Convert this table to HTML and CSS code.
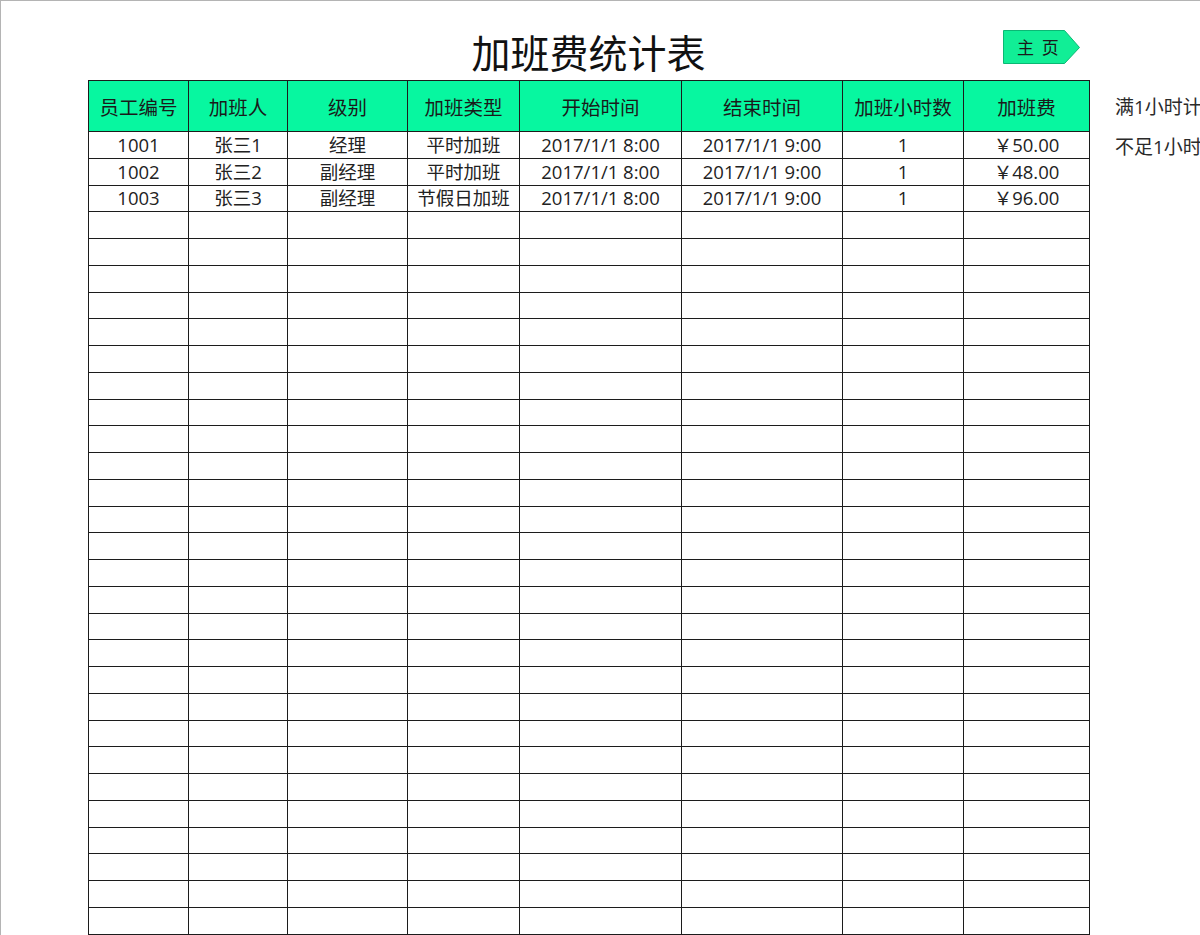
FILE: index.html
```html
<!DOCTYPE html>
<html lang="zh-CN">
<head>
<meta charset="utf-8">
<title>加班费统计表</title>
<link rel="stylesheet" href="styles.css">
</head>
<body>
<div class="page">
  <div class="main">
    <div class="head">
      <div class="spacer"></div>
      <h1 class="title">加班费统计表</h1>
      <a class="home-btn" href="#">
        <svg class="home-shape" width="78" height="35" viewBox="0 0 78 35">
          <polygon points="0.5,0.5 61.5,0.5 76.5,17.5 61.5,33.5 0.5,33.5" fill="#11ee96" stroke="#0bb874" stroke-width="1"/>
        </svg>
        <span class="home-label">主 页</span>
      </a>
    </div>
    <table class="sheet">
      <colgroup>
        <col style="width:100px"><col style="width:99px"><col style="width:120px"><col style="width:112px"><col style="width:162px"><col style="width:161px"><col style="width:121px"><col style="width:126px">
      </colgroup>
      <thead>
        <tr><th>员工编号</th><th>加班人</th><th>级别</th><th>加班类型</th><th>开始时间</th><th>结束时间</th><th>加班小时数</th><th>加班费</th></tr>
      </thead>
      <tbody>
        <tr><td>1001</td><td>张三1</td><td>经理</td><td>平时加班</td><td>2017/1/1 8:00</td><td>2017/1/1 9:00</td><td>1</td><td>￥50.00</td></tr>
        <tr><td>1002</td><td>张三2</td><td>副经理</td><td>平时加班</td><td>2017/1/1 8:00</td><td>2017/1/1 9:00</td><td>1</td><td>￥48.00</td></tr>
        <tr><td>1003</td><td>张三3</td><td>副经理</td><td>节假日加班</td><td>2017/1/1 8:00</td><td>2017/1/1 9:00</td><td>1</td><td>￥96.00</td></tr>
        <tr><td></td><td></td><td></td><td></td><td></td><td></td><td></td><td></td></tr>
        <tr><td></td><td></td><td></td><td></td><td></td><td></td><td></td><td></td></tr>
        <tr><td></td><td></td><td></td><td></td><td></td><td></td><td></td><td></td></tr>
        <tr><td></td><td></td><td></td><td></td><td></td><td></td><td></td><td></td></tr>
        <tr><td></td><td></td><td></td><td></td><td></td><td></td><td></td><td></td></tr>
        <tr><td></td><td></td><td></td><td></td><td></td><td></td><td></td><td></td></tr>
        <tr><td></td><td></td><td></td><td></td><td></td><td></td><td></td><td></td></tr>
        <tr><td></td><td></td><td></td><td></td><td></td><td></td><td></td><td></td></tr>
        <tr><td></td><td></td><td></td><td></td><td></td><td></td><td></td><td></td></tr>
        <tr><td></td><td></td><td></td><td></td><td></td><td></td><td></td><td></td></tr>
        <tr><td></td><td></td><td></td><td></td><td></td><td></td><td></td><td></td></tr>
        <tr><td></td><td></td><td></td><td></td><td></td><td></td><td></td><td></td></tr>
        <tr><td></td><td></td><td></td><td></td><td></td><td></td><td></td><td></td></tr>
        <tr><td></td><td></td><td></td><td></td><td></td><td></td><td></td><td></td></tr>
        <tr><td></td><td></td><td></td><td></td><td></td><td></td><td></td><td></td></tr>
        <tr><td></td><td></td><td></td><td></td><td></td><td></td><td></td><td></td></tr>
        <tr><td></td><td></td><td></td><td></td><td></td><td></td><td></td><td></td></tr>
        <tr><td></td><td></td><td></td><td></td><td></td><td></td><td></td><td></td></tr>
        <tr><td></td><td></td><td></td><td></td><td></td><td></td><td></td><td></td></tr>
        <tr><td></td><td></td><td></td><td></td><td></td><td></td><td></td><td></td></tr>
        <tr><td></td><td></td><td></td><td></td><td></td><td></td><td></td><td></td></tr>
        <tr><td></td><td></td><td></td><td></td><td></td><td></td><td></td><td></td></tr>
        <tr><td></td><td></td><td></td><td></td><td></td><td></td><td></td><td></td></tr>
        <tr><td></td><td></td><td></td><td></td><td></td><td></td><td></td><td></td></tr>
        <tr><td></td><td></td><td></td><td></td><td></td><td></td><td></td><td></td></tr>
        <tr><td></td><td></td><td></td><td></td><td></td><td></td><td></td><td></td></tr>
        <tr><td></td><td></td><td></td><td></td><td></td><td></td><td></td><td></td></tr>
        <tr><td></td><td></td><td></td><td></td><td></td><td></td><td></td><td></td></tr>
        <tr><td></td><td></td><td></td><td></td><td></td><td></td><td></td><td></td></tr>
      </tbody>
    </table>
  </div>
  <div class="notes">
    <p class="note note-first">满1小时计</p>
    <p class="note">不足1小时</p>
  </div>
</div>
</body>
</html>
```

FILE: styles.css
```css
html, body {
  margin: 0;
  padding: 0;
  background: #ffffff;
  overflow: hidden;
  height: 100%;
}

body {
  font-family: "Noto Sans CJK SC", "Noto Sans", sans-serif;
  color: #1e1e1e;
}

.page {
  display: flex;
  align-items: flex-start;
  border-top: 1px solid #b4b4b4;
  border-left: 1px solid #b4b4b4;
  height: 100%;
  padding-left: 87px;
  box-sizing: border-box;
  width: 1200px;
  overflow: hidden;
}

.main {
  width: 1001px;
  flex: none;
}

.head {
  display: grid;
  grid-template-columns: 1fr auto 1fr;
  align-items: start;
  height: 79px;
}

.title {
  margin: 26px 0 0 0;
  font-size: 39px;
  line-height: 48px;
  font-weight: 400;
  color: #111;
  letter-spacing: 0;
}

.home-btn {
  justify-self: end;
  margin: 29px 8px 0 0;
  display: grid;
  width: 78px;
  height: 35px;
  text-decoration: none;
  color: #1a1a1a;
}

.home-shape,
.home-label {
  grid-area: 1 / 1;
}

.home-label {
  font-size: 17px;
  line-height: 34px;
  padding-left: 14px;
  letter-spacing: 2px;
}

.sheet {
  border-collapse: collapse;
  table-layout: fixed;
  width: 1001px;
}

.sheet th,
.sheet td {
  border: 1px solid #1c1c1c;
  padding: 0;
  text-align: center;
  white-space: nowrap;
  overflow: hidden;
}

.sheet th {
  background: #07f7a0;
  height: 50px;
  font-size: 19.5px;
  font-weight: 400;
  color: #1a1a1a;
}

.sheet tbody tr {
  height: 26.75px;
}

.sheet td {
  font-family: "Open Sans", "Noto Sans CJK SC", sans-serif;
  font-size: 18.5px;
  line-height: 20px;
  color: #222;
}

.notes {
  margin-left: 26px;
  padding-top: 93px;
  flex: none;
}

.note {
  margin: 0;
  font-family: "Open Sans", "Noto Sans CJK SC", sans-serif;
  font-size: 19px;
  line-height: 26px;
  white-space: nowrap;
  color: #2a2a2a;
}

.note-first {
  margin-bottom: 14px;
}
```
